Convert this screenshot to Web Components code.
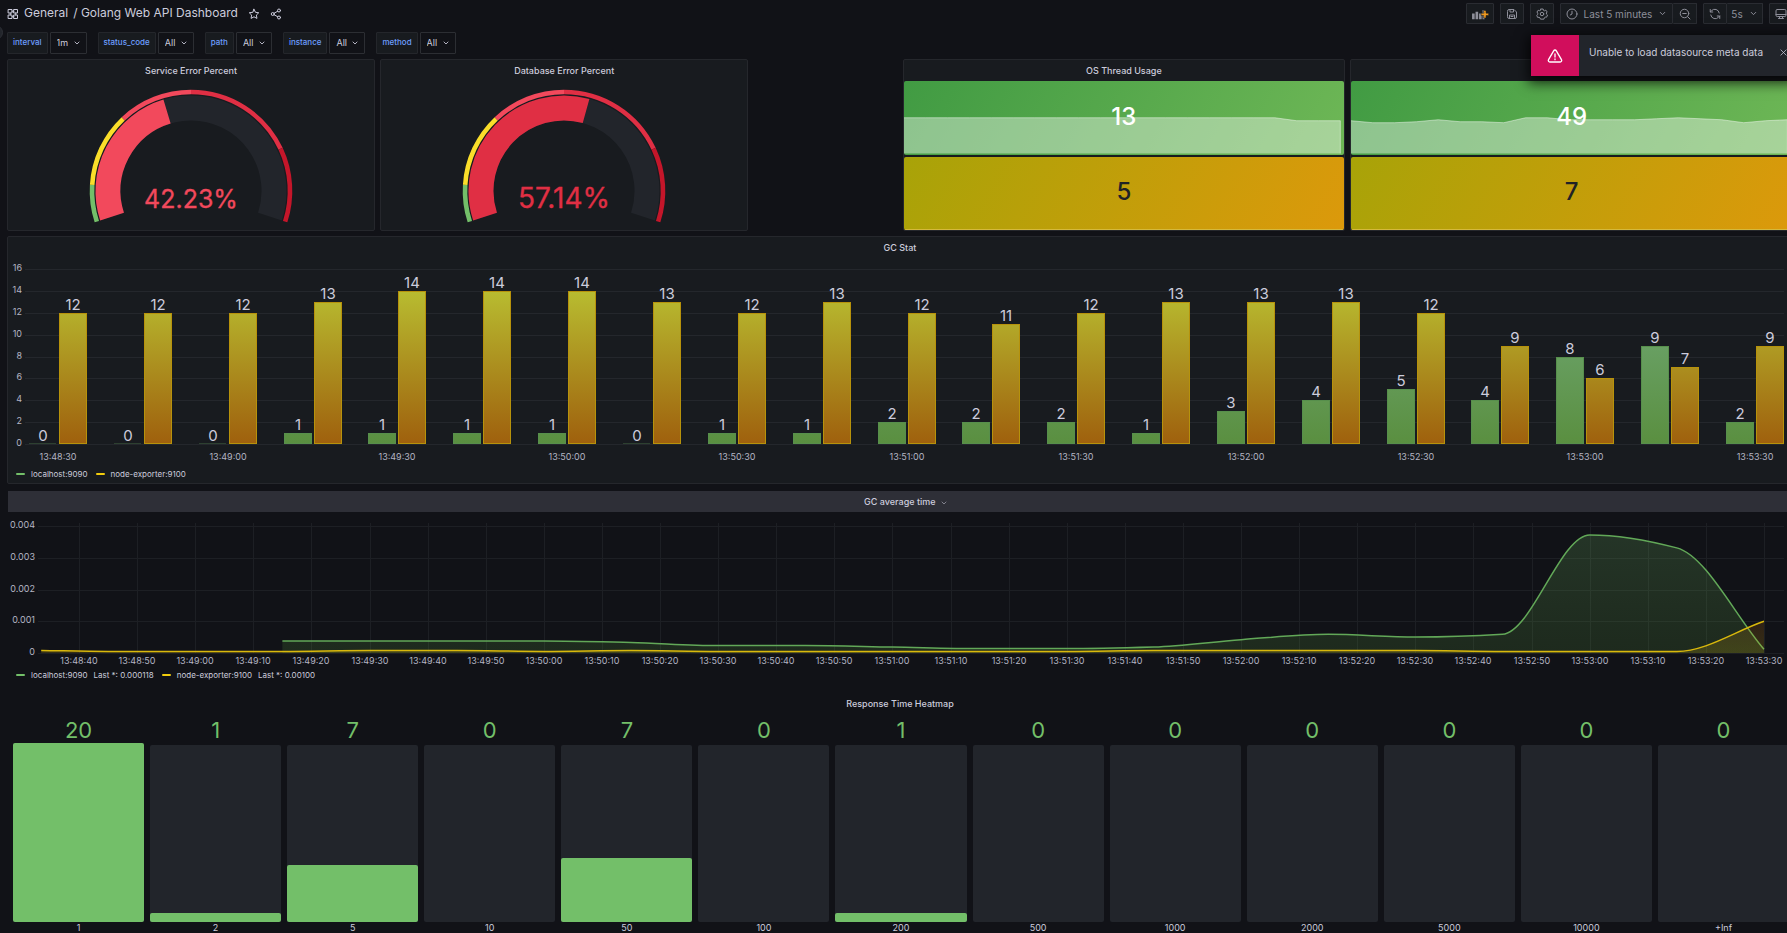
<!DOCTYPE html>
<html lang="en">
<head>
<meta charset="utf-8">
<title>Golang Web API Dashboard</title>
<style>
html{background:#111217}
body{margin:0;overflow:hidden;height:100vh;background:#111217;color:#ccccdc;font-family:Inter,"Noto Sans",sans-serif;font-size:9px}
</style>
</head>
<body>
<golang-dashboard></golang-dashboard>
<script>
const define=(name,cls)=>customElements.define(name,cls);
const ICONS={
 apps:'<path d="M3 3h7v7H3zM14 3h7v7h-7zM3 14h7v7H3zM14 14h7v7h-7zM6.500 10v4M17.500 10v4M10 6.500h4M10 17.500h4"/>',
 star:'<path d="M12 2.500l2.900 6.100 6.600.9-4.800 4.600 1.200 6.700L12 17.600l-5.900 3.200 1.200-6.700L2.500 9.500l6.600-.9z"/>',
 share:'<circle cx="18" cy="5" r="3"/><circle cx="5.500" cy="12" r="3"/><circle cx="18" cy="19" r="3"/><path d="M8.200 10.500l7-3.900M8.200 13.500l7 3.900"/>',
 chevron:'<path d="M6 9l6 6 6-6" stroke-width="2.600"/>',
 save:'<path d="M3 6a3 3 0 0 1 3-3h10l5 5v10a3 3 0 0 1-3 3H6a3 3 0 0 1-3-3zM8 3v5h7V3.500M7 21v-7h10v7M10 17h4"/>',
 cog:'<circle cx="12" cy="12" r="3.500"/><path d="M9.700 2h4.600l.6 2.600 2.300 1 2.300-1.400 2.700 3.600-1.500 2.300.6 2.400 1.700 1.700-1.900 4.200-2.700-.1-2 1.700-.5 2.300H9l-1-2.500-2-1.200-2.700.3-1.800-4.200 2-1.900V10.500L1.900 8l2.500-3.500 2.600.9 2-1z"/>',
 clock:'<circle cx="12" cy="12" r="10"/><path d="M12 6.500V12l-3.500 2"/>',
 zoomout:'<circle cx="11" cy="11" r="8.500"/><path d="M17.300 17.300L22 22M7.500 11h7"/>',
 sync:'<path d="M20.500 10A9 9 0 0 0 5 5.500L2.500 8M2.500 3v5h5M3.500 14A9 9 0 0 0 19 18.500l2.500-2.500M21.500 21v-5h-5"/>',
 monitor:'<rect x="2" y="3" width="20" height="14" rx="2.500"/><path d="M2 13h20M9 17v4M15 17v4M7 21h10"/>',
 warn:'<path d="M10 4.200a2.300 2.300 0 0 1 4 0l7.700 13.300a2.300 2.300 0 0 1-2 3.500H4.300a2.300 2.300 0 0 1-2-3.500zM12 9v4.500M12 16.500v1"/>',
 close:'<path d="M5 5l14 14M19 5L5 19"/>',
 addpanel:'<g stroke="none" fill="currentColor"><path d="M0 11h4.500v10H0zM6 8h4.500v13H6zM12 11h4.500v10H12zM18 5h3.500v16H18z"/><path fill="#f29a1f" stroke="#181b1f" stroke-width="1" d="M20 6h4v4.500h4.500v4H24V19h-4v-4.500h-4.500v-4H20z"/></g>'
};
define('dash-icon',class extends HTMLElement{
 connectedCallback(){
  const r=this.attachShadow({mode:'open'}),n=this.getAttribute('name'),wide=n==='addpanel';
  r.innerHTML=`<style>:host{display:inline-flex;flex:none;width:var(--icon,12px);height:var(--icon,12px)}:host([name=addpanel]){width:17px;height:14px}svg{width:100%;height:100%;fill:none;stroke:currentColor;stroke-width:2;stroke-linejoin:round;stroke-linecap:round}</style><svg viewBox="0 0 ${wide?29:24} 24" aria-hidden="true">${ICONS[n]}</svg>`;
 }
});
define('tool-button',class extends HTMLElement{
 connectedCallback(){
  this.attachShadow({mode:'open'}).innerHTML=`<style>
  :host{display:block;width:var(--w,24px);flex:none}
  button{box-sizing:border-box;width:100%;height:21px;padding:0;display:flex;align-items:center;justify-content:center;gap:6px;background:#181b1f;border:1px solid #2a2c32;border-radius:1px;color:#8e8f9a;font:400 10px/14px Inter,sans-serif}
  :host([joined]) button{border-left-width:0}
  </style><button aria-label="${this.getAttribute('label')}"><slot></slot></button>`;
 }
});
define('dash-header',class extends HTMLElement{
 connectedCallback(){
  this.attachShadow({mode:'open'}).innerHTML=`<style>
  :host{display:flex;justify-content:space-between;align-items:flex-start;height:32px;padding:3px 0 0 7px;box-sizing:border-box;margin-right:-6px}
  nav{display:flex;align-items:center;height:20px;font-size:12px;line-height:20px;white-space:nowrap}
  a{color:#ccccdc;text-decoration:none}
  .home{margin-left:5px;margin-right:5px}
  nav>dash-icon{position:relative;top:1px}
  nav button{padding:0;border:0;background:none;color:#ccccdc;display:flex;margin:2px 0 0 10px}
  .tools{display:flex;gap:6px}
  .group{display:flex}
  .c{--icon:9px}
  </style>
  <nav><dash-icon name="apps"></dash-icon><a class="home" href="#general">General</a><a href="#dashboard">/ Golang Web API Dashboard</a>
  <button aria-label="Mark as favorite"><dash-icon name="star"></dash-icon></button><button aria-label="Share"><dash-icon name="share"></dash-icon></button></nav>
  <div class="tools">
  <tool-button label="Add panel" style="--w:28px"><dash-icon name="addpanel"></dash-icon></tool-button>
  <tool-button label="Save dashboard"><dash-icon name="save"></dash-icon></tool-button>
  <tool-button label="Dashboard settings"><dash-icon name="cog"></dash-icon></tool-button>
  <div class="group"><tool-button label="Last 5 minutes" style="--w:113px"><dash-icon name="clock"></dash-icon><span>Last 5 minutes</span><dash-icon class="c" name="chevron"></dash-icon></tool-button><tool-button joined label="Zoom out"><dash-icon name="zoomout"></dash-icon></tool-button></div>
  <div class="group"><tool-button label="Refresh"><dash-icon name="sync"></dash-icon></tool-button><tool-button joined label="Refresh every 5s" style="--w:36px"><span>5s</span><dash-icon class="c" name="chevron"></dash-icon></tool-button></div>
  <tool-button label="Cycle view mode"><dash-icon name="monitor"></dash-icon></tool-button>
  </div>`;
 }
});
define('var-picker',class extends HTMLElement{
 connectedCallback(){
  const n=this.getAttribute('name'),v=this.getAttribute('value');
  this.attachShadow({mode:'open'}).innerHTML=`<style>
  :host{display:flex;gap:2px;height:22px}
  label{box-sizing:border-box;padding:0 5px;height:22px;border:1px solid #24262b;border-radius:1px;background:#181b1f;color:#6e9fff;font:500 8px/19px Inter,sans-serif}
  span{position:relative;display:flex}
  select{appearance:none;box-sizing:border-box;height:22px;margin:0;padding:0 17px 0 6px;border:1px solid #2c2e33;border-radius:1px;background:#111217;color:#ccccdc;font:400 9px/20px Inter,sans-serif}
  dash-icon{--icon:8px;position:absolute;right:6px;top:7px;pointer-events:none}
  </style><label for="v">${n}</label><span><select id="v"><option>${v}</option></select><dash-icon name="chevron"></dash-icon></span>`;
 }
});
define('dash-panel',class extends HTMLElement{
 connectedCallback(){
  this.attachShadow({mode:'open'}).innerHTML=`<style>
  :host{display:flex;flex-direction:column;box-sizing:border-box;min-width:0;background:#181b1f;border:1px solid #25272c;border-radius:2px;overflow:hidden}
  :host([plain]){background:none;border-color:transparent}
  :host([hovered]) h2{background:#2e2f37;margin:1px -1px 0;height:21px;line-height:21px}
  :host([compact]) h2{height:21px;line-height:21px}
  h2{margin:0;height:22px;font:500 9px/22px Inter,sans-serif;text-align:center;flex:none;color:#ccccdc}
  dash-icon{--icon:8px;vertical-align:-2px;margin-left:2px;margin-right:-12px;color:#8e8f9a}
  </style><h2>${this.getAttribute('heading')}${this.hasAttribute('hovered')?' <dash-icon name="chevron"></dash-icon>':''}</h2><slot></slot>`;
 }
});
define('error-gauge',class extends HTMLElement{
 connectedCallback(){
  const v=+this.getAttribute('value'),color=this.getAttribute('color'),size=this.getAttribute('size');
  const p=(r,pc)=>{const a=(198-pc*2.16)*Math.PI/180;return (120+r*Math.cos(a)).toFixed(2)+' '+(110-r*Math.sin(a)).toFixed(2)};
  const arc=(r,a,b,w,c)=>`<path d="M${p(r,a)}A${r} ${r} 0 ${(b-a)>83.300?1:0} 1 ${p(r,b)}" stroke="${c}" stroke-width="${w}" fill="none"/>`;
  this.attachShadow({mode:'open'}).innerHTML=`<style>:host{display:flex;flex:1;justify-content:center;min-height:0}svg{width:240px;height:149px}text{font:400 ${size}px Inter,sans-serif;text-anchor:middle}</style>
  <svg viewBox="0 0 240 149">${arc(83,0,100,25,'#22252b')}${arc(83,0,v,25,color)}
  ${[[0,10,'#73bf69'],[10,30,'#fade2a'],[30,50,'#f2495c'],[50,80,'#e02f44'],[80,100,'#c4162a']].map(s=>arc(99,s[0],s[1],4.600,s[2])).join('')}
  <text x="120" y="127" fill="${color}" stroke="${color}" stroke-width=".3">${v.toFixed(2)}%</text></svg>`;
 }
});
define('stat-tile',class extends HTMLElement{
 connectedCallback(){
  const pts=(this.getAttribute('points')||'').split(' ').filter(Boolean).map(Number);
  const end=this.getAttribute('end')||100;
  const line=pts.map((y,i)=>`${(i*end/(pts.length-1)).toFixed(2)},${y}`).join(' ');
  this.attachShadow({mode:'open'}).innerHTML=`<style>
  :host{display:grid;grid-template:minmax(0,1fr)/minmax(0,1fr);flex:1 1 0;min-height:0;border-radius:2px;overflow:hidden;background:linear-gradient(120deg,#419b43,#6eb756);color:#fff;font:500 24px/1 Inter,sans-serif}
  :host([warm]){background:linear-gradient(120deg,#a8a308,#dc990b);color:#202226}
  svg,span{grid-area:1/1;width:100%;height:100%;min-height:0}
  span{display:flex;align-items:center;justify-content:center;padding-bottom:2px;box-sizing:border-box}
  :host([warm]) span{border-bottom:1px solid #d5b93c;padding-bottom:1px}
  polygon{fill:rgba(255,255,255,.4)}polyline{fill:none;stroke:rgba(255,255,255,.45);stroke-width:1;vector-effect:non-scaling-stroke}
  </style>${pts.length?`<svg viewBox="0 0 100 74" preserveAspectRatio="none" aria-hidden="true"><polygon points="0,73 ${line} ${end},73"/><polyline points="${line} ${end},73"/></svg>`:''}<span><slot></slot></span>`;
 }
});
const AXIS='.tick{font:400 9px Inter,sans-serif;fill:#b4b5c3}.grid{stroke:#24272c;stroke-width:1;shape-rendering:crispEdges}';
/* Charts draw at the size of their box and redraw when it changes. */
class Chart extends HTMLElement{
 connectedCallback(){
  this.attachShadow({mode:'open'}).innerHTML=`<style>:host{display:block;flex:1;min-height:0;overflow:hidden}svg{display:block}${AXIS}${this.css()}</style><svg role="img"></svg>`;
  this.svg=this.shadowRoot.querySelector('svg');
  this.render();
  new ResizeObserver(()=>this.render()).observe(this);
 }
 render(){
  const w=Math.round(this.clientWidth),h=Math.round(this.clientHeight);
  if(!w||!h||(w===this.w&&h===this.h))return;
  this.w=w;this.h=h;
  this.svg.setAttribute('width',w);this.svg.setAttribute('height',h);
  this.svg.innerHTML=this.draw(w,h);
 }
}
const clock=s=>new Date(s*1000).toISOString().slice(11,19);
define('bar-chart',class extends Chart{
 css(){return '.v{font:400 15px Inter,sans-serif;fill:#ccccdc;text-anchor:middle}.m{text-anchor:middle}.e{text-anchor:end}'}
 draw(w,h){
  const G=[0,0,0,1,1,1,1,0,1,1,2,2,2,1,3,4,5,4,8,9,2],Y=[12,12,12,13,14,14,14,13,12,13,12,11,12,13,13,13,12,9,6,7,9];
  const y0=h-21,y=v=>Math.round(y0-v*(y0-10)/16),right=w-8,step=(right-58-21)/20;
  let s=`<defs><linearGradient id="y" gradientUnits="userSpaceOnUse" x1="0" y1="${y(14)}" x2="0" y2="${y0}"><stop stop-color="#b8bc30"/><stop offset="1" stop-color="#9f600d"/></linearGradient><linearGradient id="g" gradientUnits="userSpaceOnUse" x1="0" y1="${y(9)}" x2="0" y2="${y0}"><stop stop-color="#689f62"/><stop offset="1" stop-color="#5a8f40"/></linearGradient></defs>`;
  for(let v=0;v<=16;v+=2)s+=`<path class="grid" d="M17 ${y(v)}H${right}"/><text class="tick e" x="14" y="${y(v)+2}">${v}</text>`;
  const bar=(x,v,f,c)=>(v?`<rect x="${x+.5}" y="${y(v)+.5}" width="27" height="${y0-y(v)-1}" fill="url(#${f})" stroke="${c}"/>`:`<path d="M${x} ${y0-.5}h27" stroke="#2d4030"/>`)+`<text class="v" x="${x+14}" y="${y(v)-3}">${v}</text>`;
  G.forEach((g,i)=>{const x=Math.round(21+i*step);s+=bar(x,g,'g','#578f4c')+bar(x+30,Y[i],'y','#b7920b');
   if(i%2===0)s+=`<text class="tick m" x="${x+29}" y="${h-5}">${clock(49710+i*15)}</text>`});
  return s;
 }
});
define('line-chart',class extends Chart{
 css(){return '.grid{stroke:#1d1f24}.m{text-anchor:middle}.e{text-anchor:end}.l{fill:none;stroke-width:1.5}'}
 draw(w,h){
  const y0=h-13,y=v=>y0-v*(y0-14)/4,last=w-28,left=71,px=(last-left)/290,x=t=>left+t*px;
  let s=`<defs><linearGradient id="a" x1="0" y1="0" x2="0" y2="1"><stop stop-color="#73bf69" stop-opacity=".2"/><stop offset="1" stop-color="#5a9f3c" stop-opacity=".17"/></linearGradient><linearGradient id="b" x1="0" y1="0" x2="0" y2="1"><stop stop-color="#e0790c" stop-opacity=".15"/><stop offset="1" stop-color="#f2cc0c" stop-opacity=".16"/></linearGradient></defs>`;
  for(let v=0;v<=4;v++)s+=`<path class="grid" d="M30 ${Math.round(y(v))}H${w-8}"/><text class="tick e" x="27" y="${Math.round(y(v))+2}">${v?'0.00'+v:'0'}</text>`;
  for(let t=0;t<=290;t+=10){const X=Math.round(x(t));s+=`<path class="grid" d="M${X} 11V${y0}"/><text class="tick m" x="${X}" y="${h-2}">${clock(49720+t)}</text>`}
  const curve=(pts,c,f)=>{
   const n=pts.length,d=[],m=[];
   for(let i=0;i<n-1;i++)d[i]=(pts[i+1][1]-pts[i][1])/(pts[i+1][0]-pts[i][0]);
   for(let i=0;i<n;i++)m[i]=i===0?d[0]:i===n-1?d[n-2]:d[i-1]*d[i]<=0?0:2*d[i-1]*d[i]/(d[i-1]+d[i]);
   let p=`M${pts[0].map(v=>v.toFixed(1))}`;
   for(let i=0;i<n-1;i++){const k=(pts[i+1][0]-pts[i][0])/3;
    p+=`C${[pts[i][0]+k,pts[i][1]+m[i]*k,pts[i+1][0]-k,pts[i+1][1]-m[i+1]*k,...pts[i+1]].map(v=>v.toFixed(1))}`}
   return `<path d="${p}V${y0}H${pts[0][0].toFixed(1)}Z" fill="url(#${f})"/><path class="l" d="${p}" stroke="${c}"/>`};
  const G=[.375,.375,.375,.375,.33,.235,.235,.19,.14,.14,.19,.42,.59,.5,.59,3.72,3.31,.118];
  const Y=[.05,.05,.05,.08,.08,.05,.08,.05,.05,.05,.05,.05,.08,.08,.08,.08,.05,.05,.05,1];
  s+=curve(G.map((v,i)=>[x(35+i*15),y(v)]),'#62a858','a');
  s+=curve([[x(-6.500),y(.08)],...Y.map((v,i)=>[x(5+i*15),y(v)])],'#d9b80c','b');
  return s;
 }
});
define('chart-legend',class extends HTMLElement{
 connectedCallback(){
  const items=JSON.parse(this.getAttribute('items'));
  this.attachShadow({mode:'open'}).innerHTML=`<style>:host{display:block;flex:none}ul{margin:0;padding:0 0 0 8px;display:flex;gap:8px;list-style:none;font:400 8px/18px Inter,sans-serif;white-space:nowrap}li{display:flex;align-items:center;gap:6px}i{width:9px;height:2px;border-radius:1px;background:var(--c)}</style><ul>${items.map(([c,a,b])=>`<li style="--c:${c}"><i></i><span>${a}</span>${b?`<span>${b}</span>`:''}</li>`).join('')}</ul>`;
 }
});
define('heat-bars',class extends HTMLElement{
 connectedCallback(){
  const D=[[20,1,100],[1,2,5],[7,5,32],[0,10,0],[7,50,36],[0,100,0],[1,200,5],[0,500,0],[0,1000,0],[0,2000,0],[0,5000,0],[0,10000,0],[0,'+Inf',0]];
  this.attachShadow({mode:'open'}).innerHTML=`<style>
  :host{display:flex;gap:6px;padding:0 3px 0 5px;flex:1;min-height:0}
  div{flex:1 1 0;min-width:0;display:flex;flex-direction:column;text-align:center}
  b{font:400 22px/30px Inter,sans-serif;color:#73bf69}
  i{display:flex;align-items:flex-end;height:177px;background:#22252b;border-radius:2px}
  i.full{margin-top:-2px;height:179px}
  u{display:block;width:100%;height:var(--h);background:#73bf69;border-radius:2px}
  span{font:400 9px/12px Inter,sans-serif}
  </style>${D.map(([v,l,h])=>`<div><b>${v}</b><i${h===100?' class="full"':''}><u style="--h:${h}%"></u></i><span>${l}</span></div>`).join('')}`;
 }
});
define('alert-toast',class extends HTMLElement{
 connectedCallback(){
  this.attachShadow({mode:'open'}).innerHTML=`<style>
  :host{position:absolute;z-index:3;top:35px;right:-6px;display:flex;width:262px;height:41px;background:#22252b;box-shadow:0 4px 12px 3px rgba(0,0,0,.75)}
  .i{width:48px;display:flex;align-items:center;justify-content:center;background:#d10e5c;color:#fff;--icon:16px}
  p{flex:1;margin:0;padding-left:10px;font:400 10px/35px Inter,sans-serif;white-space:nowrap}
  button{width:20px;height:35px;padding:0;border:0;background:none;color:#ccccdc;display:flex;align-items:center;justify-content:center;--icon:9px}
  </style><div class="i"><dash-icon name="warn"></dash-icon></div><p role="alert"><slot></slot></p><button aria-label="Close alert"><dash-icon name="close"></dash-icon></button>`;
 }
});
define('golang-dashboard',class extends HTMLElement{
 connectedCallback(){
  this.attachShadow({mode:'open'}).innerHTML=`<style>
  :host{display:block;position:relative;height:100vh;overflow:hidden}
  .vars{display:flex;gap:11px;padding-left:7px;margin-bottom:5px}
  main{display:grid;grid-template-columns:repeat(24,minmax(0,1fr));grid-template-rows:172px 248px 198px 246px;gap:5px;margin:0 -6px 0 7px}
  .q{grid-column:span 5}.s{grid-column:span 6}.s.first{grid-column:13/span 6}.full{grid-column:1/-1}
  .tiles{display:flex;flex-direction:column;gap:2px;flex:1;min-height:0}
  .menu{position:absolute;left:-12px;top:25px;width:15px;height:15px;padding:0;border:1px solid #2e3037;border-radius:50%;background:#22252b}
  </style>
  <dash-header></dash-header>
  <button class="menu" aria-label="Open menu"></button>
  <div class="vars"><var-picker name="interval" value="1m"></var-picker><var-picker name="status_code" value="All"></var-picker><var-picker name="path" value="All"></var-picker><var-picker name="instance" value="All"></var-picker><var-picker name="method" value="All"></var-picker></div>
  <main>
  <dash-panel class="q" compact heading="Service Error Percent"><error-gauge value="42.23" color="#f2495c" size="25"></error-gauge></dash-panel>
  <dash-panel class="q" compact heading="Database Error Percent"><error-gauge value="57.14" color="#e02f44" size="28"></error-gauge></dash-panel>
  <dash-panel class="s first" compact heading="OS Thread Usage"><div class="tiles"><stat-tile end="99" points="37 37 37 37 37 37 37 37 37 37 37 37 37 37 37 37 37 37 40 40 40">13</stat-tile><stat-tile warm>5</stat-tile></div></dash-panel>
  <dash-panel class="s" compact heading=""><div class="tiles"><stat-tile end="99" points="40 42 42 41 39 41 41 42 37 37 39 39 39 39 38 37 38 39 42 40 39">49</stat-tile><stat-tile warm>7</stat-tile></div></dash-panel>
  <dash-panel class="full" heading="GC Stat"><bar-chart></bar-chart><chart-legend items='[["#73bf69","localhost:9090"],["#f2cc0c","node-exporter:9100"]]'></chart-legend></dash-panel>
  <dash-panel class="full" plain hovered heading="GC average time"><line-chart></line-chart><chart-legend style="margin-bottom:2px" items='[["#73bf69","localhost:9090","Last *: 0.000118"],["#f2cc0c","node-exporter:9100","Last *: 0.00100"]]'></chart-legend></dash-panel>
  <dash-panel class="full" plain heading="Response Time Heatmap"><heat-bars></heat-bars></dash-panel>
  </main>
  <alert-toast>Unable to load datasource meta data</alert-toast>`;
 }
});
</script>
</body>
</html>
